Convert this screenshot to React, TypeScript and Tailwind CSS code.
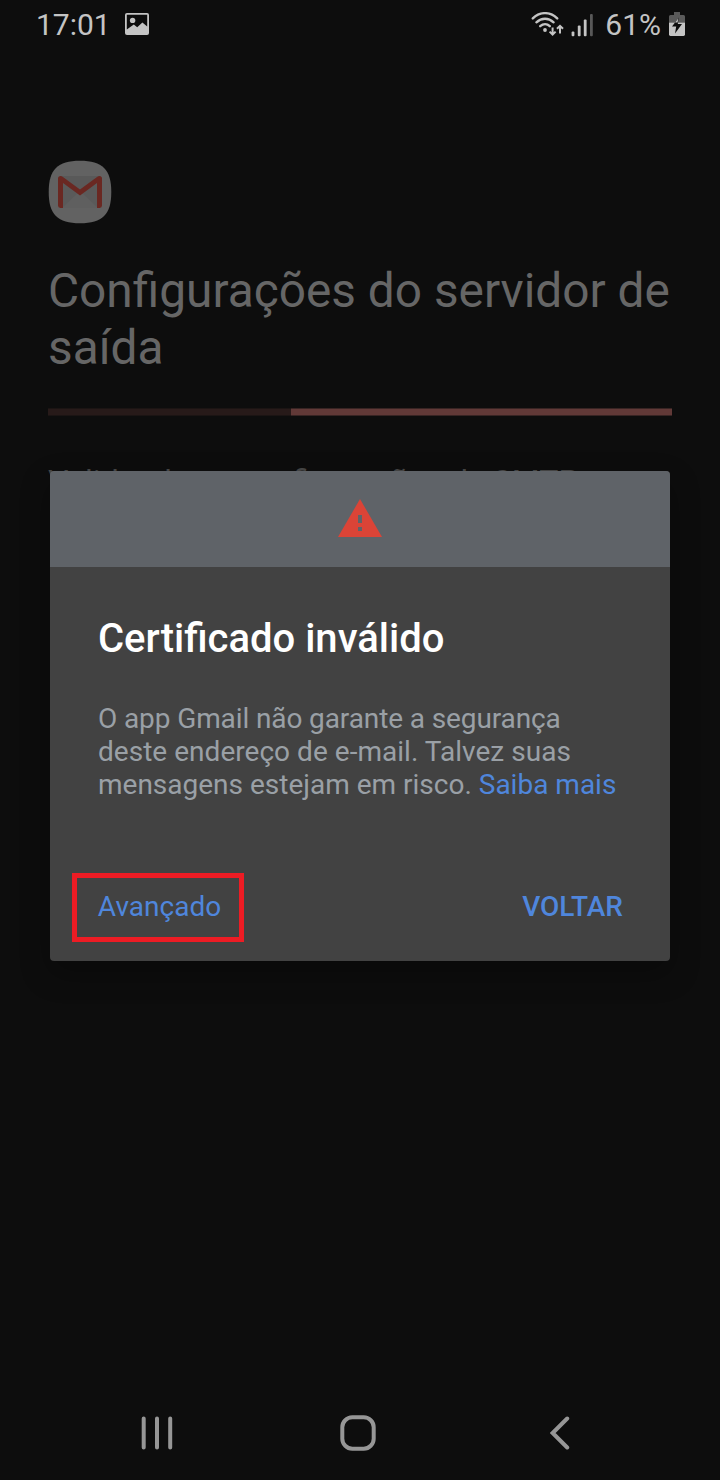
import * as React from "react";

function PictureIcon() {
  return (
    <svg width="24" height="22" viewBox="0 0 24 22" className="block">
      <rect x="0" y="0" width="24" height="22" rx="2" fill="#c4c4c4" />
      <path d="M1.8 1.8h20.4v11.6l-4.8-3.8-5.2 4.6-3.4-2.6-7 5z" fill="#0d0d0d" />
      <circle cx="7.6" cy="7.4" r="2.7" fill="#c4c4c4" />
    </svg>
  );
}

function WifiIcon() {
  return (
    <svg width="34" height="26" viewBox="0 0 34 26" fill="none" stroke="#c4c4c4">
      <g strokeWidth="2.4" strokeLinecap="round">
        <path d="M1.8 6.4C9 -.6 19 -.6 26.2 6.4" />
        <path d="M5.4 10.3c5.2-4.8 12-4.8 17.2 0" />
        <path d="M9.2 14.2c3-2.6 6.8-2.6 9.6 0" />
      </g>
      <circle cx="14" cy="18" r="1.9" fill="#c4c4c4" stroke="none" />
      <g strokeWidth="2">
        <path d="M21.6 15.5v7M18.6 19.6l3 3 3-3" />
        <path d="M29 21.5v-7.5M26 16.8l3-3 3 3" />
      </g>
    </svg>
  );
}

function SignalIcon() {
  return (
    <svg width="24" height="24" viewBox="0 0 24 24" fill="#c4c4c4">
      <rect x="0.6" y="18.4" width="2.8" height="4.8" rx="1" />
      <rect x="6.8" y="12.4" width="2.8" height="10.8" rx="1" />
      <rect x="12.8" y="6.6" width="2.8" height="16.6" rx="1" />
      <rect x="19" y="1" width="2.8" height="22.2" rx="1" fill="#585858" />
    </svg>
  );
}

function BatteryIcon() {
  return (
    <svg width="16" height="24" viewBox="0 0 16 24">
      <path d="M5 0h6v3h3.5q1.5 0 1.5 1.5V10.5H0V4.5Q0 3 1.5 3H5z" fill="#5a5a5a" />
      <path d="M0 10.5h16V22.6q0 1.4-1.4 1.4H1.4Q0 24 0 22.6z" fill="#c4c4c4" />
      <path d="M9.8 5.5L3 14.6h4.2L6 21.5l7-9.6H8.8z" fill="#0d0d0d" />
      <path d="M9.3 6.3l-3.2 4.2h2.5z" fill="#c4c4c4" />
    </svg>
  );
}

function GmailIcon() {
  return (
    <svg width="64" height="64" viewBox="0 0 64 64" className="block">
      <path d="M32 .7C54.5 .7 63.3 9.5 63.3 32S54.5 63.3 32 63.3.7 54.5.7 32 9.5.7 32 .7z" fill="#626262" />
      <rect x="12" y="16" width="40" height="32" fill="#5a5a5a" />
      <path d="M14 48l18-17 18 17z" fill="#5f5f5f" />
      <path d="M14 16h36L32 30z" fill="#595959" />
      <path
        d="M10 18.6Q10 16 12.6 16q1 0 2 .8L32 29.5l17.4-12.7q1-.8 2-.8Q54 16 54 18.6V45.6Q54 48 51.6 48H49V23L32 35.4 15 23V48h-2.6Q10 48 10 45.6z"
        fill="#6a2822"
      />
    </svg>
  );
}

function WarningIcon() {
  return (
    <svg width="44" height="38" viewBox="0 0 44 38">
      <path d="M22 0l22 38H0z" fill="#db4437" />
      <path d="M20 16h4v8h-4zM20 28h4v4h-4z" fill="#5f6368" />
    </svg>
  );
}

function StatusBar() {
  return (
    <header className="flex h-[50px] items-center pl-9 pr-[35px] text-[30px] leading-[50px] text-[#c4c4c4]">
      <span>17:01</span>
      <span className="ml-[14px] pb-[2px]">
        <PictureIcon />
      </span>
      <div className="ml-auto flex items-center">
        <WifiIcon />
        <span className="ml-[6px]">
          <SignalIcon />
        </span>
        <span className="ml-[10px]">61%</span>
        <span className="ml-2 pb-[2px]">
          <BatteryIcon />
        </span>
      </div>
    </header>
  );
}

function CertificateDialog() {
  return (
    <div className="absolute left-[50px] top-[471px] flex h-[490px] w-[620px] flex-col overflow-hidden rounded-[4px] bg-[#424242] shadow-[0_12px_30px_rgba(0,0,0,0.3)]">
      <div className="flex h-24 items-center justify-center bg-[#5f6368] pb-[2px]">
        <WarningIcon />
      </div>
      <div className="px-12">
        <h2 className="mt-[48px] text-[40px] font-medium leading-[48px] text-white">Certificado inválido</h2>
        <p className="mt-[39px] whitespace-nowrap text-[28px] leading-[33px] text-[#9aa0a6]">
          <span className="tracking-[-0.11px]">O app Gmail não garante a segurança</span>
          <br />
          <span className="tracking-[0.03px]">deste endereço de e-mail. Talvez suas</span>
          <br />
          mensagens estejam em risco. <a className="text-[#4f86dc]">Saiba mais</a>
        </p>
      </div>
      <div className="mt-auto flex items-center justify-between pb-[19px] pl-[22px] pr-[47px] text-[28px] text-[#4f86dc]">
        <button className="h-[69px] w-[172px] border-[5px] border-[#ed1c24] pb-[2px] pl-[3px]">Avançado</button>
        <button className="pb-[2px] font-medium">VOLTAR</button>
      </div>
    </div>
  );
}

function NavigationBar() {
  return (
    <nav className="mt-auto flex h-[94px] items-center pl-[141px]">
      <svg width="32" height="36" viewBox="0 0 32 36" stroke="#969696" strokeWidth="4" strokeLinecap="round">
        <path d="M2.7 3.5v29M16 3.5v29M29.2 3.5v29" />
      </svg>
      <svg
        width="36"
        height="36"
        viewBox="0 0 36 36"
        fill="none"
        stroke="#969696"
        strokeWidth="4"
        className="ml-[167px]"
      >
        <rect x="2.3" y="2.3" width="31.4" height="31.4" rx="10" />
      </svg>
      <svg
        width="20"
        height="36"
        viewBox="0 0 20 36"
        fill="none"
        stroke="#969696"
        strokeWidth="4"
        strokeLinecap="round"
        className="ml-[174px]"
      >
        <path d="M17.2 3.5L2.7 18l14.5 14.5" />
      </svg>
    </nav>
  );
}

export default function App() {
  return (
    <div className="relative flex h-[1480px] w-[720px] flex-col overflow-hidden bg-[#0d0d0d] font-['Roboto',sans-serif]">
      <StatusBar />
      <main className="px-12 pt-[110px]">
        <GmailIcon />
        <h1 className="mt-[39px] whitespace-nowrap text-[47.8px] leading-[57px] text-[#666]">
          Configurações do servidor de
          <br />
          saída
        </h1>
        <div className="mt-[31px] flex h-2">
          <div className="w-[243px] border-y border-[#1b1413] bg-[#271a19]" />
          <div className="flex-1 border-y border-[#382423] bg-[#613937]" />
        </div>
        <p className="mt-[47px] whitespace-nowrap text-[32px] leading-9 text-[#484848]">
          Validando as configurações de SMTP…
        </p>
      </main>
      <NavigationBar />
      <CertificateDialog />
    </div>
  );
}
